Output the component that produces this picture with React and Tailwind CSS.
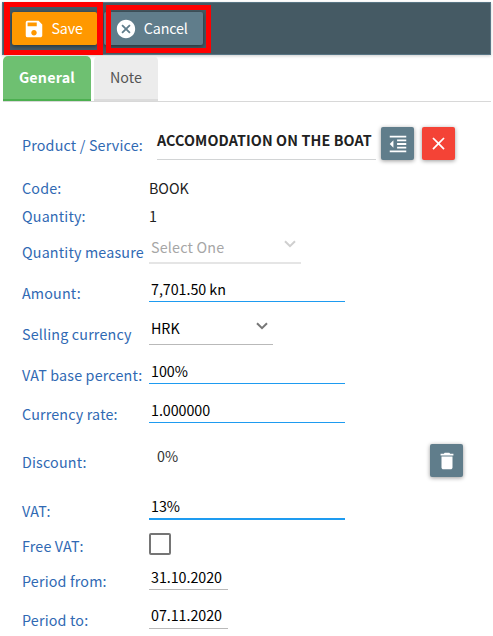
import React from "react";
import { MdSave, MdCancel, MdFormatIndentDecrease, MdClose, MdDelete } from "react-icons/md";

function Row({ label, height, labelPad = "pt-0", children }) {
  return (
    <div className={`flex items-start ${height}`}>
      <label className={`w-[127px] shrink-0 whitespace-nowrap text-[#3069b3] tracking-[0.17px] ${labelPad}`}>{label}</label>
      {children}
    </div>
  );
}

function Field({ className, children }) {
  return <div className={`flex shrink-0 items-start justify-between whitespace-nowrap pl-[2px] text-black ${className}`}>{children}</div>;
}

function Chevron({ className }) {
  return (
    <svg viewBox="0 0 12 8" className={`h-2 w-3 ${className}`} fill="none" stroke="currentColor" strokeWidth="2">
      <path d="M1 1.2 6 6.2 11 1.2" />
    </svg>
  );
}

function IconButton({ className, children }) {
  return (
    <button className={`flex h-[33px] w-[33px] shrink-0 items-center justify-center rounded-[2px] text-white shadow-[0_1px_4px_rgba(0,0,0,0.4)] ${className}`}>
      {children}
    </button>
  );
}

export default function App() {
  return (
    <div className="relative h-[636px] w-[493px] overflow-hidden bg-white pl-[2px] pt-[2px] font-['Noto_Sans_CJK_SC',sans-serif] text-[14.3px] leading-5 tracking-[-0.05px]">
      <header className="flex h-[53px] w-[489px] items-start gap-[7px] border border-[#587584] bg-[#455a64] pl-[9px] pt-[9px] tracking-[-0.15px] text-white shadow-[0_1px_3px_rgba(0,0,0,0.2)]">
        <button className="flex h-[33px] w-[85px] items-center rounded-[2px] bg-[#ff9800] pl-[11px] shadow-[0_1px_4px_rgba(0,0,0,0.5)]">
          <MdSave size={22} />
          <span className="ml-[6.5px] pb-[2px]">Save</span>
        </button>
        <button className="flex h-[33px] w-[99px] items-center rounded-[2px] bg-[#607d8b] pl-[11.3px] shadow-[0_1px_4px_rgba(0,0,0,0.5)]">
          <MdCancel size={22} />
          <span className="ml-[6.5px] pb-[2px]">Cancel</span>
        </button>
      </header>
      <div className="absolute left-[4px] top-[2px] h-[53px] w-[99px] border-x-[6px] border-y-[5px] border-[#ff0000]" />
      <div className="absolute left-[106px] top-[5px] h-[48px] w-[105px] border-[5px] border-[#ff0000]" />

      <nav className="ml-px mt-px flex h-[46px] w-[488px] items-start gap-[3px] border-b border-[#d8d8d8]">
        <div className="flex h-[45px] w-[88px] items-center justify-center rounded-t-[5px] border-b-2 border-[#4caf50] bg-[#6ec071] pb-[2px] font-bold tracking-[0.2px] text-white">General</div>
        <div className="flex h-[45px] w-[64px] items-center justify-center rounded-t-[5px] border-b-2 border-[#dcdcdc] bg-[#ececec] pb-[2px] tracking-[0.1px] text-[#555]">Note</div>
      </nav>

      <main className="ml-5 mt-[25px]">
        <Row label="Product / Service:" height="h-[51px]" labelPad="pt-2">
          <div className="ml-2 h-[33px] w-[219px] whitespace-nowrap border-b border-[#d2d4d5] pt-[3px] font-bold tracking-[0.12px] text-[#212121]">ACCOMODATION ON THE BOAT</div>
          <IconButton className="ml-[5px] bg-[#607d8b]"><MdFormatIndentDecrease size={22} /></IconButton>
          <IconButton className="ml-2 bg-[#f44336]"><MdClose size={21} /></IconButton>
        </Row>
        <Row label="Code:" height="h-[28px]"><span className="text-[#212121]">BOOK</span></Row>
        <Row label="Quantity:" height="h-[31px]"><span className="text-[#212121]">1</span></Row>
        <Row label="Quantity measure" height="h-[42px]" labelPad="pt-[5px]">
          <Field className="h-[27px] w-[152px] border-b-2 border-[#e5e5e5] tracking-[0.2px] text-[#a6a6a6]!">
            Select One<Chevron className="mr-[5.5px] mt-[3px] text-[#cfcfcf]" />
          </Field>
        </Row>
        <Row label="Amount:" height="h-[39px]" labelPad="pt-1">
          <Field className="h-[23px] w-[196px] border-b border-[#1e9bf0]">7,701.50 kn</Field>
        </Row>
        <Row label="Selling currency" height="h-[43px]" labelPad="pt-[6px]">
          <Field className="h-[27px] w-[124px] border-b border-[#b9b9b9]">
            HRK<Chevron className="mr-[5.5px] mt-[4px] text-[#777]" />
          </Field>
        </Row>
        <Row label="VAT base percent:" height="h-[39px]" labelPad="pt-1">
          <Field className="h-[23px] w-[196px] border-b border-[#1e9bf0]">100%</Field>
        </Row>
        <Row label="Currency rate:" height="h-[44px]" labelPad="pt-1">
          <Field className="h-[23px] w-[196px] border-b border-[#1e9bf0]">1.000000</Field>
        </Row>
        <Row label="Discount:" height="h-[52px]" labelPad="pt-2">
          <span className="ml-2 w-[273px] pt-[2px] text-[#333]">0%</span>
          <IconButton className="bg-[#607d8b]"><MdDelete size={22} /></IconButton>
        </Row>
        <Row label="VAT:" height="h-[36px]" labelPad="pt-[5px]">
          <Field className="h-[24px] w-[196px] border-b-2 border-[#1e9bf0]">13%</Field>
        </Row>
        <Row label="Free VAT:" height="h-[35px]" labelPad="pt-1">
          <span className="mt-px h-[22px] w-[22px] rounded-[2px] border-2 border-[#757575]" />
        </Row>
        <Row label="Period from:" height="h-[38px]" labelPad="pt-1">
          <Field className="h-[23px] w-[79px] border-b border-[#b9b9b9]">31.10.2020</Field>
        </Row>
        <Row label="Period to:" height="h-[31px]" labelPad="pt-[5px]">
          <Field className="h-[24px] w-[79px] border-b border-[#b9b9b9]">07.11.2020</Field>
        </Row>
      </main>
    </div>
  );
}
